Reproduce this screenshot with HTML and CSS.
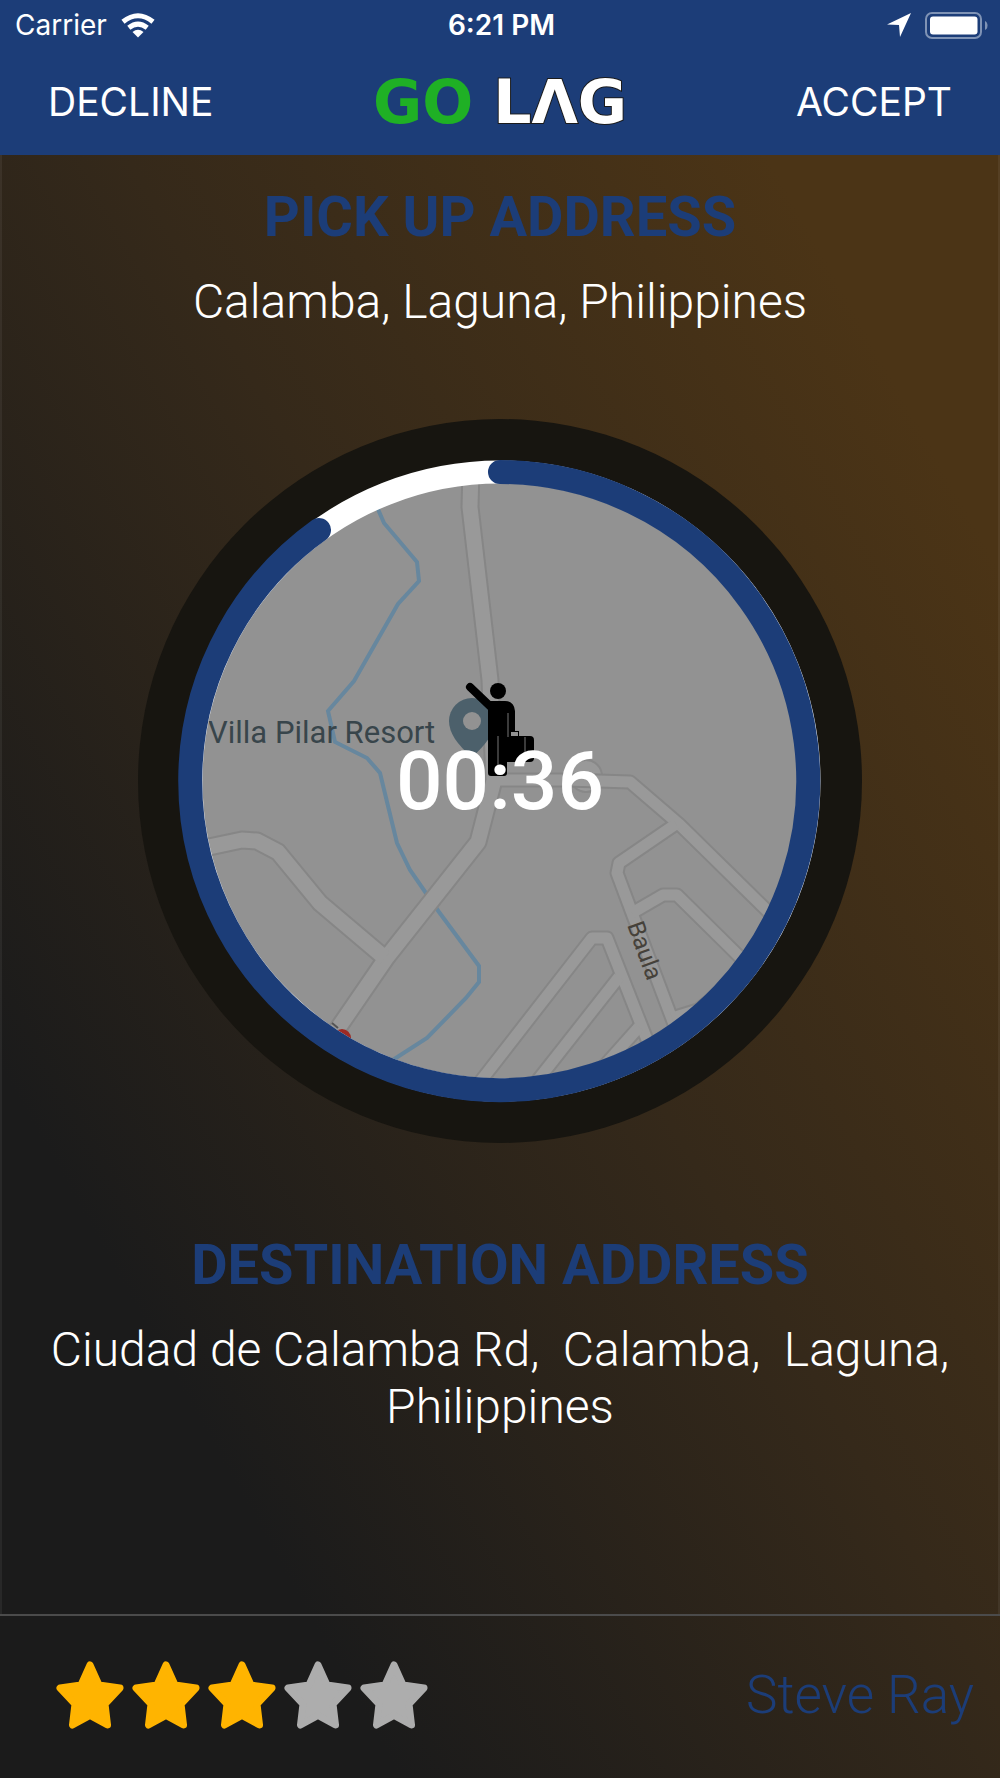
FILE: index.html
```html
<!DOCTYPE html>
<html lang="en">
<head>
  <meta charset="UTF-8">
  <meta name="viewport" content="width=device-width, initial-scale=1.0">
  <title>Go Lag</title>
  <link rel="stylesheet" href="styles.css">
</head>

<body>
  <header class="header">
    <div class="status">
      <div class="status-left">
        <span>Carrier</span>
        <svg class="wifi" viewBox="0 0 34 25" width="34" height="25">
          <path d="M17 24.500L11.500 19Q17 14.500 22.500 19Z" fill="#fff"/>
          <path d="M7.800 14.800Q17 7.500 26.200 14.800" fill="none" stroke="#fff" stroke-width="5"/>
          <path d="M2 8.800Q17 -3.300 32 8.800" fill="none" stroke="#fff" stroke-width="5"/>
        </svg>
      </div>
      <strong class="clock">6:21 PM</strong>
      <div class="status-right">
        <svg viewBox="0 0 24 24" width="24" height="24">
          <path d="M0 11.500L24 0L13 24L12 12Z" fill="#fff"/>
        </svg>
        <svg viewBox="0 0 63 27" width="63" height="27">
          <rect x="1" y="1" width="55" height="25" rx="6" fill="none" stroke="#7f93b5" stroke-width="2"/>
          <rect x="5" y="4.500" width="47.500" height="18" rx="3" fill="#fff"/>
          <path d="M60 9Q62.500 10 62.500 13.500Q62.500 17 60 18Z" fill="#7f93b5"/>
        </svg>
      </div>
    </div>
    <nav class="navbar">
      <button type="button" class="nav-btn">DECLINE</button>
      <h1 class="logo"><span class="go">GO</span><span class="lag">LΛG</span></h1>
      <button type="button" class="nav-btn">ACCEPT</button>
    </nav>
  </header>

  <main class="content">
    <section>
      <h2>PICK UP ADDRESS</h2>
      <p class="address">Calamba, Laguna, Philippines</p>
    </section>

    <div class="dial">
      <svg class="dial-map" viewBox="138 419 724 724">
        <defs>
          <clipPath id="mapClip"><circle cx="500" cy="781" r="299"/></clipPath>
          <g id="roads" fill="none" stroke-linejoin="round">
            <path d="M471 470L470 507L490 680L494 780L478 842L387 957L330 1040"/>
            <path d="M200 849L242 840L257 841L278 852L320 903L385 958"/>
          </g>
          <g id="streets" fill="none" stroke-linejoin="round">
            <path d="M494 780L567 780L630 782L680 825L790 933"/>
            <path d="M676 824L619 863L617 873L632 913L680 1040"/>
            <path d="M632 913L663 895L677 895L760 977"/>
            <path d="M480 1082L592 938L607 938L655 1060"/>
            <path d="M530 1090L619 977"/>
            <path d="M590 1082L639 1027"/>
            <path d="M672 1018L698 1010L735 980"/>
          </g>
        </defs>
        <circle cx="500" cy="781" r="362" fill="#171510"/>
        <g clip-path="url(#mapClip)">
          <rect x="200" y="480" width="600" height="602" fill="#929292"/>
          <path class="river" d="M374 500L384 523L417 562L419 581L398 604L354 681L328 711L335 742L367 758L380 773L397 843L410 870L439 912L479 966V982L466 998L427 1038L385 1065"/>
          <circle cx="586" cy="776" r="16" fill="#999" stroke="#888" stroke-width="2"/>
          <use href="#roads" class="road-edge"/>
          <use href="#streets" class="street-edge"/>
          <use href="#roads" class="road-fill"/>
          <use href="#streets" class="street-fill"/>
          <path d="M449 721A23 23 0 0 1 495 721Q494 738 472 757Q449 738 449 721Z" fill="#4c606b"/>
          <circle cx="472" cy="721" r="9" fill="#929292"/>
          <text x="208" y="743" class="map-label">Villa Pilar Resort</text>
          <text transform="translate(627 925) rotate(70)" class="street-label">Baula</text>
          <circle cx="342" cy="1038" r="9" fill="#9d2a24"/>
          <path d="M332 1023L338 1028" stroke="#555" stroke-width="2"/>
          <!-- waiting passenger -->
          <circle cx="498" cy="691" r="8"/>
          <path d="M470 687L492 708" stroke="#000" stroke-width="8" stroke-linecap="round"/>
          <path d="M488 706V773Q488 776 491 776H504Q507 776 507 773V762H530Q534 762 534 758V740Q534 736 530 736H519V731H515V711Q514 701 505 701H488Z"/>
          <path d="M498 736V768M508 713V737M525 737V761" stroke="#777" stroke-width="1"/>
          <rect x="511" y="732" width="7" height="4" fill="#929292"/>
        </g>
        <circle cx="500" cy="781" r="309" fill="none" stroke="#fff" stroke-width="23"/>
        <path class="progress" d="M500 472A309 309 0 1 1 319 530"/>
      </svg>
      <time class="timer">00:36</time>
    </div>

    <section>
      <h2>DESTINATION ADDRESS</h2>
      <p class="address">Ciudad de Calamba Rd,&nbsp; Calamba,&nbsp; Laguna, Philippines</p>
    </section>
  </main>

  <footer class="footer">
    <svg width="0" height="0" class="sprite">
      <symbol id="star" viewBox="0 0 68 68">
        <path d="M34 4L43 24L64 27L49 43L51.500 64L34 54.500L16.500 64L19 43L4 27L25 24Z" fill="currentColor" stroke="currentColor" stroke-width="7" stroke-linejoin="round"/>
      </symbol>
    </svg>
    <div class="stars" role="img" aria-label="3 of 5">
      <svg class="star on"><use href="#star"/></svg>
      <svg class="star on"><use href="#star"/></svg>
      <svg class="star on"><use href="#star"/></svg>
      <svg class="star"><use href="#star"/></svg>
      <svg class="star"><use href="#star"/></svg>
    </div>
    <span class="name">Steve Ray</span>
  </footer>
</body>
</html>
```

FILE: styles.css
```css
*{
  margin: 0;
  padding: 0;
  box-sizing: border-box;
}
body{
  min-height: 100vh;
  display: flex;
  flex-direction: column;
  font-family: Roboto, sans-serif;
  color: #fff;
  background: linear-gradient(to top right, #1b1b1b 20%, #35291a 52%, #4b3416 84%);
}
.header{
  height: 155px;
  background: #1c3d78;
  font-family: Inter, sans-serif;
}
.status{
  height: 50px;
  padding: 0 12px 0 15px;
  display: grid;
  grid-template-columns: 1fr auto 1fr;
  align-items: center;
  font-size: 28px;
}
.status-left, .status-right{
  display: flex;
  align-items: center;
  gap: 14px;
}
.status-right{
  justify-content: flex-end;
}
.clock{
  font-weight: 600;
}
.navbar{
  height: 102px;
  padding: 0 48px;
  display: grid;
  grid-template-columns: 1fr auto 1fr;
  align-items: center;
}
.nav-btn{
  border: none;
  background: none;
  color: #fff;
  font-family: Inter, sans-serif;
  font-size: 39px;
  text-align: left;
  cursor: pointer;
}
.nav-btn:last-child{
  text-align: right;
}
.logo{
  padding-top: 2px;
  display: flex;
  gap: 20px;
  font-family: "DejaVu Sans", sans-serif;
  font-size: 60px;
  line-height: 64px;
}
.go{
  color: #1fb025;
}
.lag{
  color: #fff;
  -webkit-text-stroke: 2px #1b1b1b;
  paint-order: stroke fill;
}
.content{
  flex: 1;
  padding: 30px 40px;
  display: flex;
  flex-direction: column;
  align-items: center;
  text-align: center;
  border: solid rgba(255, 255, 255, .06);
  border-width: 0 2px;
}
h2{
  color: #1c3d78;
  font-size: 56px;
  line-height: 64px;
  font-weight: 700;
}
.address{
  margin-top: 24px;
  font-size: 48px;
  line-height: 57px;
  font-weight: 300;
}
.dial{
  position: relative;
  width: 724px;
  max-width: 100%;
  margin: 89px 0 90px;
}
.dial-map{
  display: block;
  width: 100%;
}
.river{
  fill: none;
  stroke: #67879e;
  stroke-width: 4;
}
.road-edge{
  stroke: #868686;
  stroke-width: 19px;
}
.road-fill{
  stroke: #999;
  stroke-width: 15px;
}
.street-edge{
  stroke: #868686;
  stroke-width: 15px;
}
.street-fill{
  stroke: #999;
  stroke-width: 11px;
}
.progress{
  fill: none;
  stroke: #1c3d78;
  stroke-width: 24;
  stroke-linecap: round;
}
.map-label{
  font-size: 31px;
  fill: #38454b;
}
.street-label{
  font-size: 24px;
  fill: #45413a;
}
.timer{
  position: absolute;
  top: 50%;
  left: 50%;
  transform: translate(-50%, -50%);
  font-size: 82px;
  font-weight: 500;
}
.footer{
  height: 164px;
  padding: 0 26px 4px 56px;
  border-top: 2px solid #4b4b4b;
  display: flex;
  align-items: center;
  justify-content: space-between;
}
.sprite{
  position: absolute;
}
.stars{
  display: flex;
  gap: 8px;
}
.star{
  width: 68px;
  height: 68px;
  color: #adadad;
}
.star.on{
  color: #ffb400;
}
.name{
  color: #1c3d78;
  font-size: 53px;
  font-weight: 300;
}
```
